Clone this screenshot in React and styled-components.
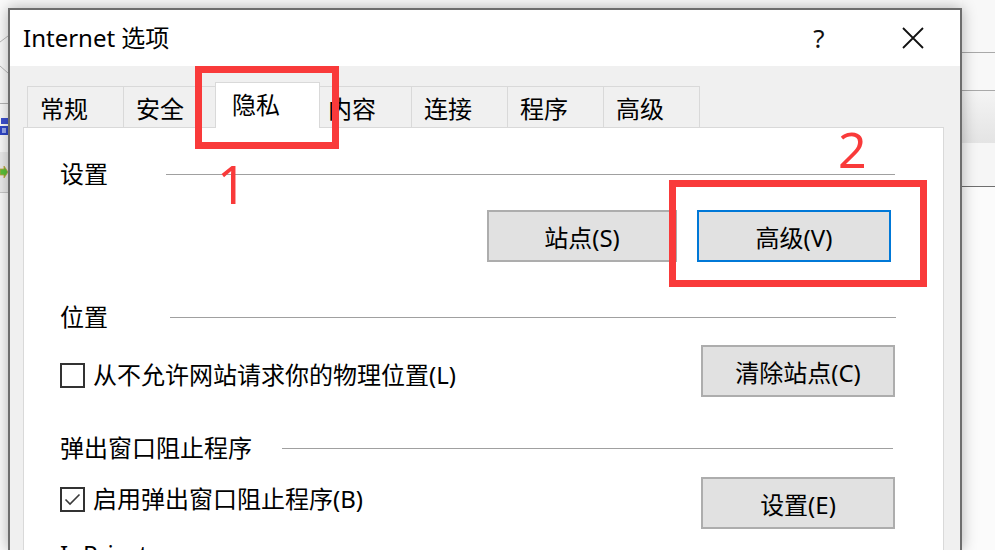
import React from "react";
import styled, { createGlobalStyle } from "styled-components";

const GlobalStyle = createGlobalStyle`
    html, body {
        margin: 0;
        padding: 0;
    }
    body {
        width: 995px;
        height: 550px;
        overflow: hidden;
        background: #fafafa;
        font-family: "Noto Sans", "Noto Sans CJK SC", sans-serif;
        color: #000;
    }
`;

const Desktop = styled.div`
    display: flex;
    height: 550px;
    overflow: hidden;
`;

// strip of the window lying behind, on the left
const LeftEdge = styled.div`
    width: 8px;
    flex: none;
    display: flex;
    flex-direction: column;
    background: #fbfbfb;
`;

const EdgeBand = styled.div`
    height: ${(props) => props.h}px;
    flex: none;
    background: ${(props) => props.bg || "transparent"};
    border-bottom: ${(props) => (props.line ? `1px solid ${props.line}` : "none")};
    display: flex;
    align-items: center;
    justify-content: flex-end;
    overflow: hidden;
`;

const RightEdge = styled.div`
    flex: 1;
    display: flex;
    flex-direction: column;
    background: #fbfbfb;
`;

const Window = styled.div`
    position: relative;
    z-index: 1;
    width: 954px;
    flex: none;
    margin-top: 8px;
    border: 2px solid #6d6d6d;
    border-bottom: none;
    box-sizing: border-box;
    display: flex;
    flex-direction: column;
    background: #f0f0f0;
    box-shadow: 0 0 14px rgba(0, 0, 0, 0.3);
`;

const TitleBar = styled.div`
    height: 56px;
    flex: none;
    display: flex;
    align-items: center;
    background: #fff;
`;

const Title = styled.div`
    flex: 1;
    padding-left: 13px;
    font-size: 24px;
    line-height: 32px;
`;

const CaptionButton = styled.div`
    width: 94px;
    height: 56px;
    display: flex;
    align-items: center;
    justify-content: center;
    font-size: 26px;
    color: #111;
`;

const Body = styled.div`
    flex: 1;
    display: flex;
    flex-direction: column;
    padding: 20px 16px 0 13px;
`;

const TabStrip = styled.div`
    display: flex;
    align-items: flex-end;
    padding-left: 4px;
    height: 41px;
    flex: none;
`;

const Tab = styled.div`
    position: relative;
    z-index: ${(props) => (props.active ? 2 : 1)};
    width: ${(props) => (props.active ? 105 : 97)}px;
    height: ${(props) => (props.active ? 46 : 41)}px;
    margin: 0 ${(props) => (props.active ? -4 : 0)}px ${(props) => (props.active ? -1 : 0)}px
        ${(props) => (props.active ? -5 : -1)}px;
    box-sizing: border-box;
    border: 1px solid #d9d9d9;
    border-bottom: none;
    background: ${(props) => (props.active ? "#fff" : "#f0f0f0")};
    display: flex;
    align-items: center;
    padding: 0 0 ${(props) => (props.active ? 4 : 0)}px ${(props) => (props.active ? 16 : 12)}px;
    font-size: 24px;
    &:first-child {
        margin-left: 0;
    }
`;

const Panel = styled.div`
    flex: 1;
    background: #fff;
    border: 1px solid #d9d9d9;
    border-bottom: none;
    padding: 0 48px 0 36px;
    display: flex;
    flex-direction: column;
`;

const GroupHeader = styled.div`
    display: flex;
    align-items: center;
    height: 32px;
    flex: none;
    margin-top: ${(props) => props.top}px;
`;

const GroupLabel = styled.div`
    font-size: 24px;
    line-height: 32px;
`;

const Rule = styled.div`
    flex: 1;
    height: 1px;
    background: #a0a0a0;
    margin-left: ${(props) => props.gap}px;
    margin-right: ${(props) => props.end || 0}px;
`;

const ButtonRow = styled.div`
    display: flex;
    justify-content: flex-end;
    gap: 20px;
    margin-top: ${(props) => props.top}px;
    padding-right: 4px;
`;

const OptionRow = styled.div`
    display: flex;
    justify-content: space-between;
    align-items: flex-start;
    margin-top: ${(props) => props.top}px;
`;

const Button = styled.div`
    width: ${(props) => props.w}px;
    height: 52px;
    box-sizing: border-box;
    border: 2px solid ${(props) => (props.focused ? "#0078d7" : "#adadad")};
    background: #e1e1e1;
    display: flex;
    align-items: center;
    justify-content: center;
    font-size: 24px;
`;

const CheckLabel = styled.label`
    display: flex;
    align-items: center;
    gap: 8px;
    height: 32px;
    margin-top: ${(props) => props.offset}px;
    font-size: 24px;
    line-height: 32px;
`;

const Box = styled.span`
    width: 25px;
    height: 25px;
    box-sizing: border-box;
    border: 2px solid #333;
    background: #fff;
    display: flex;
    align-items: center;
    justify-content: center;
`;

const RedFrame = styled.div`
    position: absolute;
    left: ${(props) => props.x}px;
    top: ${(props) => props.y}px;
    width: ${(props) => props.w}px;
    height: ${(props) => props.h}px;
    box-sizing: border-box;
    border: 7px solid #f93a3a;
    z-index: 5;
`;

const RedNumber = styled.div`
    position: absolute;
    left: ${(props) => props.x}px;
    top: ${(props) => props.y}px;
    font-family: "Noto Sans", sans-serif;
    font-size: ${(props) => props.size}px;
    line-height: ${(props) => props.size}px;
    color: #f93a3a;
    z-index: 5;
`;

const Checkbox = ({ checked }) => (
    <Box>
        {checked && (
            <svg width="19" height="19" viewBox="0 0 19 19">
                <path d="M2.5 9.5 L7 14 L16.5 4.5" fill="none" stroke="#3a3a3a" strokeWidth="1.6" />
            </svg>
        )}
    </Box>
);

const tabs = ["常规", "安全", "隐私", "内容", "连接", "程序", "高级"];

const App = () => {
    return (
        <>
            <GlobalStyle />
            <Desktop>
                <LeftEdge>
                    <EdgeBand h={103} line="#b5b5b5">
                        <svg width="8" height="103" viewBox="0 0 8 103">
                            <path d="M0 42 L8 36 M0 66 L8 73" stroke="#b8b8b8" strokeWidth="1" />
                        </svg>
                    </EdgeBand>
                    <EdgeBand h={12} />
                    <EdgeBand h={22}>
                        <svg width="8" height="22" viewBox="0 0 8 22">
                            <rect x="1" y="2" width="7" height="6" fill="#3b4fd0" />
                            <rect x="0" y="10" width="8" height="9" fill="#2f46c8" />
                            <rect x="2" y="12" width="4" height="5" fill="#9aaaf0" />
                        </svg>
                    </EdgeBand>
                    <EdgeBand h={14} />
                    <EdgeBand h={40} bg="#ececec" line="#c8c8c8">
                        <svg width="8" height="14" viewBox="0 0 8 14">
                            <path d="M0 4 L4 4 L4 1 L8 7 L4 13 L4 10 L0 10 Z" fill="#5bc23a" stroke="#c9a23a" strokeWidth="0.8" />
                        </svg>
                    </EdgeBand>
                </LeftEdge>

                <Window>
                    <TitleBar>
                        <Title>Internet 选项</Title>
                        <CaptionButton>?</CaptionButton>
                        <CaptionButton>
                            <svg width="22" height="22" viewBox="0 0 22 22">
                                <path d="M1 1 L21 21 M21 1 L1 21" stroke="#111" strokeWidth="1.8" />
                            </svg>
                        </CaptionButton>
                    </TitleBar>

                    <Body>
                        <TabStrip>
                            {tabs.map((t) => (
                                <Tab key={t} active={t === "隐私"}>
                                    {t}
                                </Tab>
                            ))}
                        </TabStrip>

                        <Panel>
                            <GroupHeader top={30}>
                                <GroupLabel>设置</GroupLabel>
                                <Rule gap={58} />
                            </GroupHeader>
                            <ButtonRow top={20}>
                                <Button w={190}>站点(S)</Button>
                                <Button w={194} focused>
                                    高级(V)
                                </Button>
                            </ButtonRow>

                            <GroupHeader top={39}>
                                <GroupLabel>位置</GroupLabel>
                                <Rule gap={62} end={-1} />
                            </GroupHeader>
                            <OptionRow top={12}>
                                <CheckLabel offset={14}>
                                    <Checkbox />
                                    从不允许网站请求你的物理位置(L)
                                </CheckLabel>
                                <Button w={194}>清除站点(C)</Button>
                            </OptionRow>

                            <GroupHeader top={35}>
                                <GroupLabel>弹出窗口阻止程序</GroupLabel>
                                <Rule gap={30} end={2} />
                            </GroupHeader>
                            <OptionRow top={13}>
                                <CheckLabel offset={6}>
                                    <Checkbox checked />
                                    启用弹出窗口阻止程序(B)
                                </CheckLabel>
                                <Button w={194}>设置(E)</Button>
                            </OptionRow>

                            <GroupHeader top={9}>
                                <GroupLabel>InPrivate</GroupLabel>
                            </GroupHeader>
                        </Panel>
                    </Body>

                    <RedFrame x={185} y={56} w={144} h={83} />
                    <RedNumber x={207} y={148} size={52}>
                        1
                    </RedNumber>
                    <RedFrame x={659} y={170} w={258} h={107} />
                    <RedNumber x={828} y={114} size={50}>
                        2
                    </RedNumber>
                </Window>

                <RightEdge>
                    <EdgeBand h={52} bg="#f8f8f8" line="#a9a9a9" />
                    <EdgeBand h={37} bg="#f8f8f8" line="#a9a9a9" />
                    <EdgeBand h={52} bg="linear-gradient(#f4f4f4, #e4e4e4)" />
                    <EdgeBand h={43} bg="#f6f6f6" line="#6f6f6f" />
                </RightEdge>
            </Desktop>
        </>
    );
};

export default App;
